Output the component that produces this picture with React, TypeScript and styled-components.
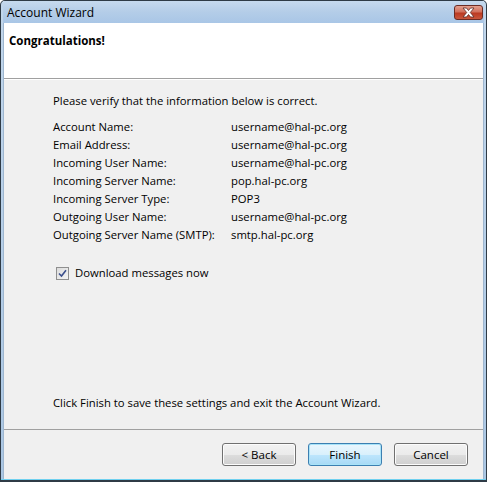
import React from "react";
import styled, { createGlobalStyle } from "styled-components";

const GlobalStyle = createGlobalStyle`
  html, body {
    margin: 0;
    padding: 0;
    background: #ffffff;
  }
  body {
    font-family: "Open Sans", "Noto Sans", sans-serif;
    font-size: 11.3px;
    color: #000;
  }
`;

const rows = [
  ["Account Name:", "username@hal-pc.org"],
  ["Email Address:", "username@hal-pc.org"],
  ["Incoming User Name:", "username@hal-pc.org"],
  ["Incoming Server Name:", "pop.hal-pc.org"],
  ["Incoming Server Type:", "POP3"],
  ["Outgoing User Name:", "username@hal-pc.org"],
  ["Outgoing Server Name (SMTP):", "smtp.hal-pc.org"],
];

const App = () => {
  return (
    <>
      <GlobalStyle />
      <Window>
        <TitleBar>
          <Title>Account Wizard</Title>
          <CloseButton>
            <svg width="17" height="11" viewBox="0 0 17 11">
              <path
                d="M3 1 L6.5 1 L8.5 3.5 L10.5 1 L14 1 L10.3 5.5 L14 10 L10.5 10 L8.5 7.5 L6.5 10 L3 10 L6.7 5.5 Z"
                fill="#ffffff"
                stroke="#5a2a24"
                strokeWidth="0.8"
                strokeLinejoin="round"
              />
            </svg>
          </CloseButton>
        </TitleBar>
        <Client>
          <Header>
            <Heading>Congratulations!</Heading>
          </Header>
          <Body>
            <Intro>Please verify that the information below is correct.</Intro>
            <InfoGrid>
              {rows.map(([label, value]) => (
                <React.Fragment key={label}>
                  <Cell>{label}</Cell>
                  <Cell>{value}</Cell>
                </React.Fragment>
              ))}
            </InfoGrid>
            <CheckRow>
              <CheckBox>
                <svg width="9" height="9" viewBox="0 0 9 9">
                  <path
                    d="M1 4.5 L3.5 7 L8 1.2"
                    fill="none"
                    stroke="#3b4f8c"
                    strokeWidth="1.6"
                  />
                </svg>
              </CheckBox>
              <span>Download messages now</span>
            </CheckRow>
            <Spacer />
            <Outro>
              Click Finish to save these settings and exit the Account Wizard.
            </Outro>
          </Body>
          <Footer>
            <Button>&lt; Back</Button>
            <Button primary>Finish</Button>
            <Button>Cancel</Button>
          </Footer>
        </Client>
      </Window>
    </>
  );
};

export default App;

const Window = styled.div`
  width: 487px;
  height: 482px;
  box-sizing: border-box;
  border: 1px solid #2f3b46;
  border-bottom-width: 2px;
  border-radius: 5px 5px 0 0;
  background: linear-gradient(180deg, #c2d7ec 0%, #aac6e3 100%);
  padding: 0 2px 1px 2px;
  display: flex;
  flex-direction: column;
  box-shadow: inset 0 -1px 0 #6fd0ef;
`;

const TitleBar = styled.div`
  height: 22px;
  display: flex;
  align-items: center;
  justify-content: space-between;
  padding: 0 1px 0 4px;
  background: linear-gradient(180deg, #c6daee 0%, #b4cde8 50%, #a9c6e6 100%);
`;

const Title = styled.div`
  font-size: 12px;
  color: #000;
`;

const CloseButton = styled.div`
  width: 29px;
  height: 15px;
  margin-top: 1px;
  box-sizing: border-box;
  border: 1px solid #6b2c24;
  border-radius: 3px;
  background: linear-gradient(180deg, #e4a08f 0%, #d1715d 45%, #bb3a22 55%, #c9563c 100%);
  display: flex;
  align-items: center;
  justify-content: center;
`;

const Client = styled.div`
  flex: 1;
  display: flex;
  flex-direction: column;
  background: #f0f0f0;
  border-left: 1px solid #9eb6cf;
  border-right: 1px solid #9eb6cf;
`;

const Header = styled.div`
  height: 56px;
  background: #ffffff;
  border-bottom: 1px solid #a0a0a0;
  box-shadow: 0 1px 0 #ffffff;
  padding: 8px 0 0 5px;
  box-sizing: border-box;
`;

const Heading = styled.div`
  font-weight: bold;
  font-size: 11.5px;
  line-height: 20px;
`;

const Body = styled.div`
  flex: 1;
  display: flex;
  flex-direction: column;
  padding: 13px 0 17px 49px;
`;

const Intro = styled.div`
  line-height: 18px;
  margin-bottom: 8px;
`;

const InfoGrid = styled.div`
  display: grid;
  grid-template-columns: 178px auto;
  grid-auto-rows: 18px;
`;

const Cell = styled.div`
  line-height: 18px;
  white-space: nowrap;
`;

const CheckRow = styled.div`
  display: flex;
  align-items: center;
  gap: 6px;
  margin-top: 20px;
  margin-left: 3px;
  line-height: 18px;
`;

const CheckBox = styled.div`
  width: 13px;
  height: 13px;
  box-sizing: border-box;
  border: 1px solid #8f8f8f;
  background: linear-gradient(135deg, #dcdcdc 0%, #f4f4f4 100%);
  display: flex;
  align-items: center;
  justify-content: center;
`;

const Spacer = styled.div`
  flex: 1;
`;

const Outro = styled.div`
  line-height: 18px;
`;

const Footer = styled.div`
  height: 50px;
  box-sizing: border-box;
  border-top: 1px solid #a0a0a0;
  display: flex;
  justify-content: flex-end;
  align-items: flex-start;
  gap: 12px;
  padding: 13px 15px 0 0;
`;

const Button = styled.div<{ primary?: boolean }>`
  width: 74px;
  height: 23px;
  box-sizing: border-box;
  border: 1px solid ${(p) => (p.primary ? "#3c7fb1" : "#707070")};
  border-radius: 3px;
  background: ${(p) =>
    p.primary
      ? "linear-gradient(180deg, #eaf6fd 0%, #d9f0fc 50%, #bee6fd 51%, #a7d9f5 100%)"
      : "linear-gradient(180deg, #f2f2f2 0%, #ebebeb 50%, #dddddd 51%, #cfcfcf 100%)"};
  box-shadow: inset 0 0 0 1px ${(p) => (p.primary ? "#a8e3f8" : "#fcfcfc")};
  display: flex;
  align-items: center;
  justify-content: center;
  font-size: 11.5px;
  cursor: default;
`;
